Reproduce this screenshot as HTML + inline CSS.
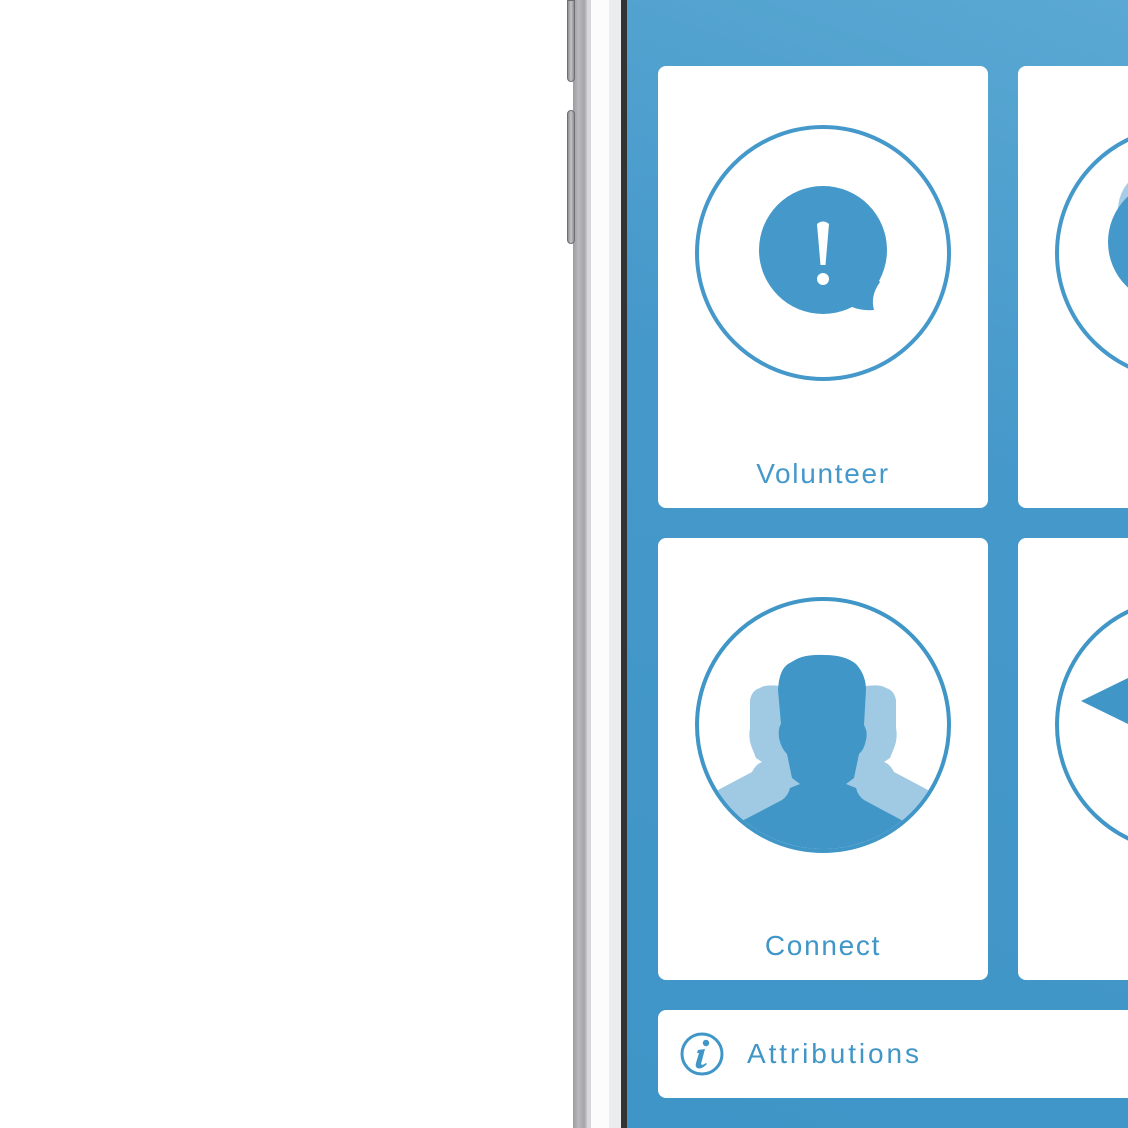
<!DOCTYPE html>
<html><head><meta charset="utf-8"><style>
html,body{margin:0;padding:0;width:1128px;height:1128px;overflow:hidden;background:#fff;font-family:"Liberation Sans",sans-serif}
.abs{position:absolute}
</style></head><body>
<div class="abs" style="left:573px;top:0;width:14px;height:1128px;background:linear-gradient(90deg,#9c9ca1,#b9b9bd 40%,#a4a4a9 80%,#c9c9cc)"></div>
<div class="abs" style="left:587px;top:0;width:4px;height:1128px;background:#d8d8db"></div>
<div class="abs" style="left:591px;top:0;width:18px;height:1128px;background:#fcfcfc"></div>
<div class="abs" style="left:609px;top:0;width:12px;height:1128px;background:#ebecee"></div>
<div class="abs" style="left:621px;top:0;width:6px;height:1128px;background:#333"></div>
<div class="abs" style="left:567px;top:0;width:8px;height:82px;border-radius:0 0 4px 4px;background:linear-gradient(90deg,#8e8e93,#c4c4c8,#8e8e93);border:1px solid #6d6d72;box-sizing:border-box"></div>
<div class="abs" style="left:567px;top:110px;width:8px;height:134px;border-radius:4px;background:linear-gradient(90deg,#8e8e93,#c4c4c8,#8e8e93);border:1px solid #6d6d72;box-sizing:border-box"></div>
<div class="abs" style="left:627px;top:0;width:501px;height:1128px;background:linear-gradient(200deg,#5aa8d3 0%,#4598ca 40%,#3f95c7 100%)"></div>

<div class="abs" style="left:658px;top:66px;width:330px;height:442px;background:#fff;border-radius:8px"></div>
<div class="abs" style="left:1018px;top:66px;width:130px;height:442px;background:#fff;border-radius:8px"></div>
<div class="abs" style="left:658px;top:538px;width:330px;height:442px;background:#fff;border-radius:8px"></div>
<div class="abs" style="left:1018px;top:538px;width:130px;height:442px;background:#fff;border-radius:8px"></div>
<div class="abs" style="left:658px;top:1010px;width:490px;height:88px;background:#fff;border-radius:8px"></div>

<svg class="abs" style="left:0;top:0" width="1128" height="1128" viewBox="0 0 1128 1128">
<defs><clipPath id="c1"><circle cx="823" cy="725" r="124"/></clipPath></defs>
<circle cx="823" cy="253" r="126" fill="none" stroke="#4598ca" stroke-width="4"/>
<circle cx="823" cy="250" r="64" fill="#4598ca"/>
<path d="M845 300 L852 307 Q862 311 874 310 Q870 296 880 282 L870 270 Z" fill="#4598ca"/>
<path d="M817 224 Q823 219 829 224 L825.5 265 L820.5 265 Z" fill="#fff"/>
<circle cx="823" cy="279" r="6" fill="#fff"/>
<circle cx="1183" cy="253" r="126" fill="none" stroke="#4598ca" stroke-width="4"/>
<circle cx="1160" cy="210" r="42" fill="#a6cde5"/>
<circle cx="1170" cy="242" r="62" fill="#4598ca"/>

<circle cx="823" cy="725" r="126" fill="none" stroke="#4096c7" stroke-width="4"/>
<g clip-path="url(#c1)">
<path d="M760 688 Q765 684 780 686 L830 686 L830 860 L700 860 L718 790 L752 772 Q756 764 762 762 L756 758 L752 748 Q748 738 750 728 L750 700 Q752 690 760 688 Z" fill="#a0c9e3"/>
<path d="M886 688 Q881 684 866 686 L816 686 L816 860 L946 860 L928 790 L894 772 Q890 764 884 762 L890 758 L894 748 Q898 738 896 728 L896 700 Q894 690 886 688 Z" fill="#a0c9e3"/>
<path d="M795 660 Q805 654 825 655 Q845 655 856 664 Q866 675 866 690 L864 725 Q868 732 866 740 Q864 750 859 754 L854 778 L846 784 L856 788 Q858 796 864 800 L905 822 L905 870 L740 870 L740 822 L782 800 Q788 796 790 788 L800 784 L792 778 L787 754 Q781 748 779 738 Q778 728 781 724 L778 690 Q779 670 788 664 Z" fill="#3f96c7"/>
</g>

<circle cx="1183" cy="725" r="126" fill="none" stroke="#4096c7" stroke-width="4"/>
<path d="M1081 701 L1130 677 L1130 725 Z" fill="#3f96c7"/>

<circle cx="702" cy="1054" r="20" fill="none" stroke="#4096c7" stroke-width="3"/>
<circle cx="706" cy="1043" r="3.2" fill="#4096c7"/>
<path d="M698 1050 L705 1049 L701 1064 Q702 1066 706 1063 L707 1064 Q701 1070 697 1068 Q695 1066 696 1063 L699 1053 L697 1053 Z" fill="#4096c7"/>
</svg>

<div class="abs" style="left:658px;top:458px;width:330px;text-align:center;font-size:28px;color:#4598ca;letter-spacing:1.7px">Volunteer</div>
<div class="abs" style="left:658px;top:930px;width:330px;text-align:center;font-size:28px;color:#4096c7;letter-spacing:1.7px">Connect</div>
<div class="abs" style="left:747px;top:1038px;font-size:28px;color:#4096c7;letter-spacing:2.9px">Attributions</div>
</body></html>
